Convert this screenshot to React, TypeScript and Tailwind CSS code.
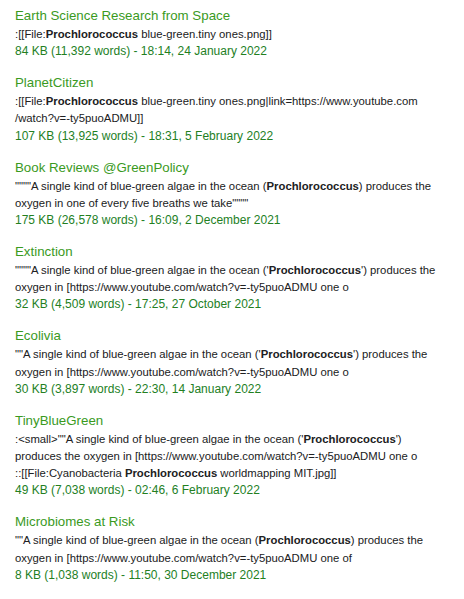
import type { ReactNode } from "react";

const B = ({ children }: { children: ReactNode }) => <b className="font-bold">{children}</b>;

const results: { title: string; snippet: ReactNode; meta: string }[] = [
  {
    title: "Earth Science Research from Space",
    snippet: (
      <>
        :[[File:<B>Prochlorococcus</B> blue-green.tiny ones.png]]
      </>
    ),
    meta: "84 KB (11,392 words) - 18:14, 24 January 2022",
  },
  {
    title: "PlanetCitizen",
    snippet: (
      <>
        :[[File:<B>Prochlorococcus</B> blue-green.tiny ones.png|link=https://www.youtube.com
        <br />
        /watch?v=-ty5puoADMU]]
      </>
    ),
    meta: "107 KB (13,925 words) - 18:31, 5 February 2022",
  },
  {
    title: "Book Reviews @GreenPolicy",
    snippet: (
      <>
        """"A single kind of blue-green algae in the ocean (<B>Prochlorococcus</B>) produces the
        <br />
        oxygen in one of every five breaths we take""""
      </>
    ),
    meta: "175 KB (26,578 words) - 16:09, 2 December 2021",
  },
  {
    title: "Extinction",
    snippet: (
      <>
        """"A single kind of blue-green algae in the ocean ('<B>Prochlorococcus</B>') produces the
        <br />
        oxygen in [https://www.youtube.com/watch?v=-ty5puoADMU one o
      </>
    ),
    meta: "32 KB (4,509 words) - 17:25, 27 October 2021",
  },
  {
    title: "Ecolivia",
    snippet: (
      <>
        ""A single kind of blue-green algae in the ocean ('<B>Prochlorococcus</B>') produces the
        <br />
        oxygen in [https://www.youtube.com/watch?v=-ty5puoADMU one o
      </>
    ),
    meta: "30 KB (3,897 words) - 22:30, 14 January 2022",
  },
  {
    title: "TinyBlueGreen",
    snippet: (
      <>
        :&lt;small&gt;""A single kind of blue-green algae in the ocean ('<B>Prochlorococcus</B>')
        <br />
        produces the oxygen in [https://www.youtube.com/watch?v=-ty5puoADMU one o
        <br />
        ::[[File:Cyanobacteria <B>Prochlorococcus</B> worldmapping MIT.jpg]]
      </>
    ),
    meta: "49 KB (7,038 words) - 02:46, 6 February 2022",
  },
  {
    title: "Microbiomes at Risk",
    snippet: (
      <>
        ""A single kind of blue-green algae in the ocean (<B>Prochlorococcus</B>) produces the
        <br />
        oxygen in [https://www.youtube.com/watch?v=-ty5puoADMU one of
      </>
    ),
    meta: "8 KB (1,038 words) - 11:50, 30 December 2021",
  },
];

export default function App() {
  return (
    <div className="min-h-screen bg-white pl-[15px] pt-[5px] font-['Liberation_Sans',Arial,sans-serif]">
      <ul className="flex flex-col gap-[12px]">
        {results.map((r) => (
          <li key={r.title}>
            <div className="text-[13.3px] leading-[21px] text-[#3a9a1e]">{r.title}</div>
            <div className="whitespace-nowrap text-[11.3px] leading-[17.2px] text-[#202122]">{r.snippet}</div>
            <div className="text-[12px] leading-[17px] text-[#237f1f]">{r.meta}</div>
          </li>
        ))}
      </ul>
    </div>
  );
}
